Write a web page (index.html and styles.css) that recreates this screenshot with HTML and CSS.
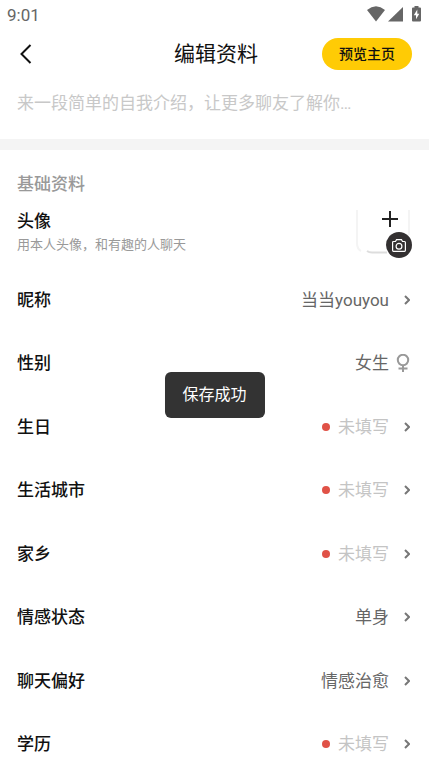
FILE: index.html
```html
<!DOCTYPE html>
<html lang="zh-CN">
<head>
<meta charset="utf-8">
<meta name="viewport" content="width=device-width, initial-scale=1">
<title>编辑资料</title>
<link rel="stylesheet" href="styles.css">
</head>
<body>
<div class="status">
  <span>9:01</span>
  <span class="status-icons">
    <svg width="18" height="16" viewBox="0 0 18 16"><path d="M0 4Q9-3.400 18 4L9 15.500Z"/></svg>
    <svg width="15" height="16" viewBox="0 0 15 16"><path d="M15 1V15.500H0Z"/></svg>
    <svg class="battery" width="9" height="16" viewBox="0 0 9 16"><path d="M2.500 1.500V0h4v1.500H8q1 0 1 1V14.500q0 1-1 1H1q-1 0-1-1V2.500q0-1 1-1Z"/><path fill="#fff" d="M5.300 3.500L1.800 9.200H4v4L7.300 7.700H5.300Z"/></svg>
  </span>
</div>
<header class="bar">
  <button class="back" aria-label="返回"><svg width="12" height="20" viewBox="0 0 12 20"><path d="M10.500 1L1.500 10L10.500 19"/></svg></button>
  <h1>编辑资料</h1>
  <button class="preview">预览主页</button>
</header>
<main>
  <input class="intro" type="text" aria-label="自我介绍" placeholder="来一段简单的自我介绍，让更多聊友了解你…">
  <section class="basic">
    <h2>基础资料</h2>
    <div class="avatar-row">
      <div>
        <h3>头像</h3>
        <p>用本人头像，和有趣的人聊天</p>
      </div>
      <button class="avatar" aria-label="上传头像">
        <svg class="frame" width="56" height="46" viewBox="0 0 56 46"><path stroke="#f4f4f4" d="M1 1V34Q1 40 5 42M53 1V26"/><path stroke="#ddd" d="M11 42Q13 43.500 16 43.500H31"/></svg>
        <svg class="plus" width="16" height="16" viewBox="0 0 16 16"><path d="M8 0V16M0 8H16"/></svg>
        <span class="camera"><svg width="14" height="13" viewBox="0 0 14 13"><path d="M1.500 2.500H3.500L4.500 .7H9.500L10.500 2.500H12.500Q13.400 2.500 13.400 3.500V11.300Q13.400 12.300 12.500 12.300H1.500Q.6 12.300 .6 11.300V3.500Q.6 2.500 1.500 2.500Z"/><circle cx="7" cy="7.200" r="2.900"/></svg></span>
      </button>
    </div>
    <ul class="list">
      <li><span class="label">昵称</span><span class="value">当当youyou</span><svg class="arrow" viewBox="0 0 6 10"><path d="M1 1L5 5L1 9"/></svg></li>
      <li><span class="label">性别</span><span class="value">女生</span><svg class="female" viewBox="0 0 14 18"><circle cx="7" cy="6" r="5.200"/><path d="M7 11V18M2.500 14.500H11.500"/></svg></li>
      <li><span class="label">生日</span><span class="value empty">未填写</span><svg class="arrow" viewBox="0 0 6 10"><path d="M1 1L5 5L1 9"/></svg></li>
      <li><span class="label">生活城市</span><span class="value empty">未填写</span><svg class="arrow" viewBox="0 0 6 10"><path d="M1 1L5 5L1 9"/></svg></li>
      <li><span class="label">家乡</span><span class="value empty">未填写</span><svg class="arrow" viewBox="0 0 6 10"><path d="M1 1L5 5L1 9"/></svg></li>
      <li><span class="label">情感状态</span><span class="value">单身</span><svg class="arrow" viewBox="0 0 6 10"><path d="M1 1L5 5L1 9"/></svg></li>
      <li><span class="label">聊天偏好</span><span class="value">情感治愈</span><svg class="arrow" viewBox="0 0 6 10"><path d="M1 1L5 5L1 9"/></svg></li>
      <li><span class="label">学历</span><span class="value empty">未填写</span><svg class="arrow" viewBox="0 0 6 10"><path d="M1 1L5 5L1 9"/></svg></li>
    </ul>
  </section>
</main>
<div class="toast" role="status">保存成功</div>
</body>
</html>
```
FILE: styles.css
```css
* { box-sizing: border-box; }
html { scrollbar-width: none; }
body {
  margin: 0;
  background: #fff;
  color: #111;
  font-family: Roboto, "Noto Sans CJK SC", sans-serif;
  font-size: 17px;
  line-height: 24px;
}
h1, h2, h3, p, ul { margin: 0; padding: 0; font-weight: 400; }
button { border: 0; padding: 0; background: none; font: inherit; color: inherit; cursor: pointer; }
svg { display: block; flex: none; }

.status {
  display: flex;
  justify-content: space-between;
  align-items: center;
  height: 30px;
  padding: 0 8px 0 7px;
  color: #666;
}
.status-icons { display: flex; gap: 3px; fill: #666; padding-bottom: 2px; }
.battery { margin-left: 6px; }

.bar {
  display: grid;
  grid-template-columns: 1fr auto 1fr;
  align-items: center;
  height: 48px;
  padding: 0 17px 0 20px;
}
.back { justify-self: start; }
.back path { fill: none; stroke: #111; stroke-width: 2; }
h1 { font-size: 21px; line-height: 30px; color: #111; }
.preview {
  justify-self: end;
  height: 32px;
  padding: 0 17px;
  border-radius: 16px;
  background: #ffcb05;
  font-size: 14px;
  font-weight: 500;
}

.intro {
  display: block;
  width: 100%;
  height: 61px;
  padding: 0 17px 12px;
  border: 0;
  outline: 0;
  font: inherit;
}
.intro::placeholder { color: #c8c8c8; opacity: 1; }

.basic { border-top: 11px solid #f4f4f4; padding: 22px 17px 0; }
h2 { font-size: 17px; font-weight: 500; color: #999; }
.avatar-row { display: flex; justify-content: space-between; padding-top: 13px; height: 72px; }
h3, .label { font-size: 17px; font-weight: 500; color: #111; }
.avatar-row p { font-size: 13px; color: #999; }
.avatar {
  position: relative;
  width: 56px;
  height: 46px;
}
.frame { fill: none; stroke-width: 2; }
.plus { position: absolute; top: 2px; right: 14px; stroke: #222; stroke-width: 2; }
.camera {
  position: absolute;
  right: 0;
  bottom: -3px;
  display: grid;
  place-items: center;
  width: 26px;
  height: 26px;
  border-radius: 50%;
  background: #333031;
}
.camera svg { fill: none; stroke: #fff; stroke-width: 1.2; }

.list { list-style: none; }
.list li { display: flex; align-items: center; height: 63px; }
.list li:nth-child(even) { height: 64px; }
.value { margin-left: auto; color: #666; }
.empty { display: flex; align-items: center; gap: 8px; color: #c4c4c4; }
.empty::before { content: ""; width: 8px; height: 8px; border-radius: 50%; background: #e05247; }
.arrow { width: 6px; height: 10px; margin: 0 2px 0 15px; fill: none; stroke: #777; stroke-width: 2; }
.female { width: 14px; height: 18px; margin-left: 7px; margin-right: 2px; fill: none; stroke: #999; stroke-width: 2; }

.toast {
  position: fixed;
  top: 372px;
  left: 50%;
  transform: translateX(-50%);
  padding: 11px 18px;
  border-radius: 6px;
  background: #333;
  color: #fff;
  font-size: 16px;
  white-space: nowrap;
}
```
